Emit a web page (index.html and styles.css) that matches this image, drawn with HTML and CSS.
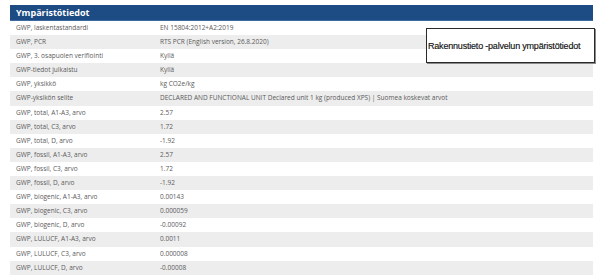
FILE: index.html
```html
<!DOCTYPE html>
<html lang="fi">
<head>
<meta charset="utf-8">
<link rel="stylesheet" href="styles.css">
</head>
<body>
<div class="panel">
  <div class="panel-head">Ympäristötiedot</div>
  <div class="rows">
    <div class="row"><span class="k">GWP, laskentastandardi</span><span class="v">EN 15804:2012+A2:2019</span></div>
    <div class="row"><span class="k">GWP, PCR</span><span class="v">RTS PCR (English version, 26.8.2020)</span></div>
    <div class="row"><span class="k">GWP, 3. osapuolen verifiointi</span><span class="v">Kyllä</span></div>
    <div class="row"><span class="k">GWP-tiedot julkaistu</span><span class="v">Kyllä</span></div>
    <div class="row"><span class="k">GWP, yksikkö</span><span class="v">kg CO2e/kg</span></div>
    <div class="row"><span class="k">GWP-yksikön selite</span><span class="v">DECLARED AND FUNCTIONAL UNIT Declared unit 1 kg (produced XPS) | Suomea koskevat arvot</span></div>
    <div class="row"><span class="k">GWP, total, A1-A3, arvo</span><span class="v">2.57</span></div>
    <div class="row"><span class="k">GWP, total, C3, arvo</span><span class="v">1.72</span></div>
    <div class="row"><span class="k">GWP, total, D, arvo</span><span class="v">-1.92</span></div>
    <div class="row"><span class="k">GWP, fossil, A1-A3, arvo</span><span class="v">2.57</span></div>
    <div class="row"><span class="k">GWP, fossil, C3, arvo</span><span class="v">1.72</span></div>
    <div class="row"><span class="k">GWP, fossil, D, arvo</span><span class="v">-1.92</span></div>
    <div class="row"><span class="k">GWP, biogenic, A1-A3, arvo</span><span class="v">0.00143</span></div>
    <div class="row"><span class="k">GWP, biogenic, C3, arvo</span><span class="v">0.000059</span></div>
    <div class="row"><span class="k">GWP, biogenic, D, arvo</span><span class="v">-0.00092</span></div>
    <div class="row"><span class="k">GWP, LULUCF, A1-A3, arvo</span><span class="v">0.0011</span></div>
    <div class="row"><span class="k">GWP, LULUCF, C3, arvo</span><span class="v">0.000008</span></div>
    <div class="row"><span class="k">GWP, LULUCF, D, arvo</span><span class="v">-0.00008</span></div>
  </div>
  <div class="callout">Rakennustieto -palvelun ympäristötiedot</div>
</div>
</body>
</html>
```
FILE: styles.css
```css
html, body {
  margin: 0;
  padding: 0;
  background: #ffffff;
}
body {
  padding: 5px 9px 0 10px;
  font-family: "Open Sans", "Liberation Sans", sans-serif;
}
.panel {
  position: relative;
  width: 583px;
}
.panel-head {
  height: 16px;
  line-height: 16px;
  background: #1d4b83;
  color: #ffffff;
  font-weight: 700;
  font-size: 9px;
  padding-left: 6px;
  border-bottom: 1px solid #3d6aa0;
  box-sizing: border-box;
}
.rows {
  display: flex;
  flex-direction: column;
}
.row {
  display: flex;
  height: 14.1px;
  line-height: 14.1px;
  font-size: 6.5px;
  color: #5a5a5a;
}
.row:nth-child(even) {
  background: #ededed;
}
.k {
  width: 144px;
  padding-left: 6px;
  white-space: nowrap;
}
.v {
  white-space: nowrap;
}
.callout {
  position: absolute;
  left: 416px;
  top: 23px;
  width: 166px;
  height: 33px;
  border: 1px solid #2a2a2a;
  box-shadow: 1px 1px 0 #8a8a8a;
  background: #ffffff;
  font-family: "Liberation Sans", Arial, sans-serif;
  font-size: 9px;
  font-weight: 500;
  -webkit-text-stroke: 0.15px #111111;
  color: #111111;
  display: flex;
  align-items: center;
  padding-left: 1px;
  letter-spacing: -0.2px;
  white-space: nowrap;
  box-sizing: content-box;
}
```
